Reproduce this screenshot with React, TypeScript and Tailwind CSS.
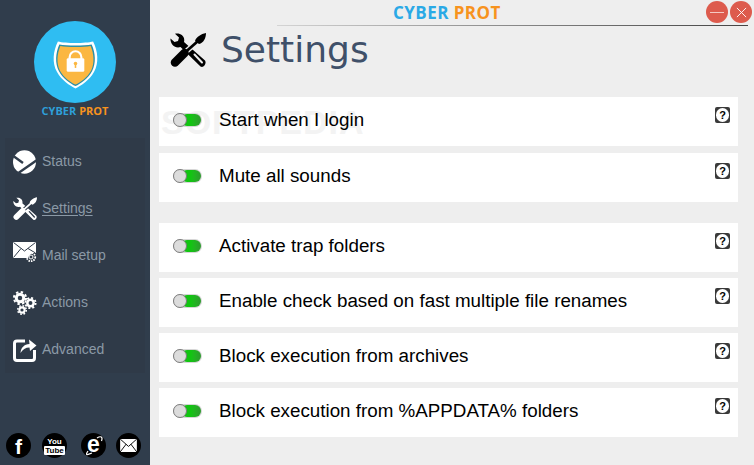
import { ReactNode } from 'react';

const font = "font-['Liberation_Sans',Arial,sans-serif]";

function ToolsIcon({ className, bg }: { className: string; bg: string }) {
  return (
    <svg viewBox="0 0 36 35" className={className} fill="currentColor">
      <path d="M0.500 5.500 L4.500 9 L8 8 L9 4.500 L5 0.800 C10 -0.500 15.500 3 14 9 L35 27.500 C37 30.500 33.500 35.500 30.500 33.500 L10.500 14 C5 16 0 11 0.500 5.500 Z" />
      <path d="M24.500 21.500 L32 29.500" stroke={bg} strokeWidth="2" strokeLinecap="round" fill="none" />
      <path d="M15 19.500 L28 8" stroke={bg} strokeWidth="5.500" fill="none" />
      <path d="M15 19.500 L28 8" stroke="currentColor" strokeWidth="2.800" fill="none" />
      <path d="M5 29.500 L14.500 20" stroke="currentColor" strokeWidth="8.500" strokeLinecap="round" fill="none" />
      <path d="M25 8 C26 4 31 1 36 0 C36 5 33.500 10 29 11 Z" />
    </svg>
  );
}

function StatusIcon() {
  return (
    <svg viewBox="0 0 23 24" className="w-[23px] h-[24px] text-white" fill="currentColor">
      <ellipse cx="11.500" cy="12" rx="11.500" ry="11.800" />
      <path d="M-1 5 L10 13 M24 10 L4 24" stroke="#303c4b" strokeWidth="2.400" fill="none" />
    </svg>
  );
}

function MailIcon() {
  return (
    <svg viewBox="0 0 28 24" className="w-[28px] h-[24px] text-white -mt-[4px]">
      <path d="M0 0 H23 V11 A7 7 0 0 0 15 16 H0 Z" fill="currentColor" />
      <path d="M0.500 0.500 L11.500 9 L22.500 0.500 M0.500 15.500 L8 6.500 M22.500 11 L15 6.500" stroke="#303c4b" strokeWidth="1" fill="none" />
      <circle cx="18" cy="15" r="4.200" stroke="currentColor" strokeWidth="1.800" strokeDasharray="1.500 1" fill="none" />
      <circle cx="18" cy="15" r="2" stroke="currentColor" strokeWidth="1" fill="none" />
    </svg>
  );
}

// eight teeth: the ring's circumference is split into 16 equal dashes
function Gear({ x, y, r }: { x: number; y: number; r: number }) {
  const ring = r * 0.86;
  const dash = (2 * Math.PI * ring) / 16;
  return (
    <g>
      <circle cx={x} cy={y} r={r * 0.74} fill="currentColor" />
      <circle cx={x} cy={y} r={ring} fill="none" stroke="currentColor" strokeWidth={r * 0.3} strokeDasharray={`${dash} ${dash}`} />
      <circle cx={x} cy={y} r={r * 0.32} fill="#303c4b" />
    </g>
  );
}

function GearsIcon() {
  return (
    <svg viewBox="0 0 24 25" className="w-[24px] h-[25px] text-white">
      <Gear x={7} y={8} r={7} />
      <Gear x={17.500} y={13} r={6} />
      <Gear x={9} y={20} r={5} />
    </svg>
  );
}

function AdvancedIcon() {
  return (
    <svg viewBox="0 0 24 24" className="w-[24px] h-[24px] text-white" fill="none" stroke="currentColor">
      <path d="M12 3 H4 Q1.500 3 1.500 5.500 V20 Q1.500 22.500 4 22.500 H19 Q21.500 22.500 21.500 20 V12" strokeWidth="3" />
      <path d="M7.500 15 C8 9.500 11 6.500 16.500 6 L16 1.500 L23.500 7.500 L17 13 L16.500 9.500 C12.500 9.500 9.500 11.500 7.500 15 Z" fill="currentColor" stroke="none" />
    </svg>
  );
}

function NavItem({ icon, label, active }: { icon: ReactNode; label: string; active?: boolean }) {
  return (
    <div className="h-[47px] mx-[5px] pl-[8px] flex items-center bg-[#2f3a48]">
      <div className="w-[29px] flex justify-start">{icon}</div>
      <span className={`text-[14px] text-[#8b99a6] ${active ? 'underline underline-offset-2' : ''}`}>{label}</span>
    </div>
  );
}

function SocialIcon({ children, className = '' }: { children: ReactNode; className?: string }) {
  return (
    <div className={`w-[25px] h-[25px] rounded-full bg-black flex items-center justify-center text-white relative ${className}`}>
      {children}
    </div>
  );
}

function SettingRow({ label, className = '', watermark }: { label: string; className?: string; watermark?: boolean }) {
  return (
    <div className={`h-[49px] bg-white flex items-start pl-[14px] pr-[8px] relative ${className}`}>
      {watermark && (
        <span className="absolute left-[2px] top-[8px] text-[34px] leading-[34px] font-bold tracking-[1px] text-[#f3f3f3]">SOFTPEDIA</span>
      )}
      <div className="mt-[16px] w-[29px] h-[14px] rounded-full bg-[#d6d6d6] relative shrink-0">
        <div className="absolute left-[8px] top-[1px] w-[20px] h-[12px] rounded-full bg-gradient-to-r from-[#12c412] from-50% to-[#2c9a2c]" />
        <div className="absolute left-0 top-0 w-[14px] h-[14px] rounded-full bg-[#dcdcdc] border border-[#7d7d7d]" />
      </div>
      <span className="ml-[17px] mt-[12px] text-[18.800px] leading-[22px] text-black relative">{label}</span>
      <div className="ml-auto mt-[10px] w-[15px] h-[16px] rounded-[2px] bg-[#3a3a3a] flex items-center justify-center">
        <div className="w-[13px] h-[14px] rounded-full bg-white text-[11px] leading-[14px] font-bold text-center text-black">?</div>
      </div>
    </div>
  );
}

export default function App() {
  return (
    <div className={`w-[754px] h-[465px] flex overflow-hidden bg-[#eeeeee] ${font}`}>
      <aside className="w-[150px] h-full shrink-0 bg-[#303d4c] flex flex-col">
        <div className="flex flex-col items-center pt-[21px]">
          <div className="w-[82px] h-[82px] rounded-full bg-[#2fbdf2] flex items-start justify-center pt-[18px]">
            <svg viewBox="0 0 48 52" className="w-[47px] h-[52px]">
              <path d="M6 2 C14 4 34 4 42 2 C47 12 48 24 43 33 C38 42 30 47 24 50 C18 47 10 42 5 33 C0 24 1 12 6 2 Z" fill="#ffffff" />
              <path d="M7.500 5 C15 6.500 33 6.500 40.500 5 C44.500 14 45 24 41 32 C37 40 29 45 24 47.500 C19 45 11 40 7 32 C3 24 3.500 14 7.500 5 Z" fill="#2b8fa8" />
              <path d="M8.500 6.500 C16 8 32 8 39.500 6.500 C43 15 43.500 24 40 31.500 C36 39 29 43.500 24 46 C19 43.500 12 39 8 31.500 C4.500 24 5 15 8.500 6.500 Z" fill="#fbb741" />
              <path d="M18 20 V18 A6 6 0 0 1 30 18 V20" fill="none" stroke="#ffffff" strokeWidth="2.200" />
              <rect x="15" y="19" width="18" height="14" rx="1.500" fill="#ffffff" />
              <circle cx="24" cy="24.500" r="1.800" fill="#fbb741" />
              <rect x="23.200" y="24.500" width="1.600" height="4.500" fill="#fbb741" />
            </svg>
          </div>
          <div className="mt-[1px] text-[11px] leading-[14px] font-bold font-['Open_Sans',sans-serif]">
            <span className="text-[#2e9fd8]">CYBER</span> <span className="text-[#f7931e]">PROT</span>
          </div>
        </div>
        <nav className="mt-[20px] flex flex-col">
          <NavItem icon={<StatusIcon />} label="Status" />
          <NavItem icon={<ToolsIcon className="w-[24px] h-[24px] text-white" bg="#2f3a48" />} label="Settings" active />
          <NavItem icon={<MailIcon />} label="Mail setup" />
          <NavItem icon={<GearsIcon />} label="Actions" />
          <NavItem icon={<AdvancedIcon />} label="Advanced" />
        </nav>
        <div className="mt-auto mb-[7px] pl-[6px] flex">
          <SocialIcon>
            <span className="text-[21px] font-bold leading-[25px] mt-[2px]">f</span>
          </SocialIcon>
          <SocialIcon className="ml-[11px]">
            <div className="flex flex-col items-center text-[8px] leading-[9px] font-bold">
              <span>You</span>
              <span className="bg-white text-black px-[1px] rounded-[1px]">Tube</span>
            </div>
          </SocialIcon>
          <SocialIcon className="ml-[14px]">
            <span className="text-[23px] font-bold leading-[25px] -mt-[3px]">e</span>
            <svg viewBox="0 0 25 25" className="absolute inset-0 w-[25px] h-[25px]" fill="none" stroke="#ffffff" strokeWidth="1.200">
              <path d="M7 18 C3 24 8 21 11 20 M16 5 C20 2.500 22 4 20.500 8" />
            </svg>
          </SocialIcon>
          <SocialIcon className="ml-[10px]">
            <svg viewBox="0 0 18 14" className="w-[17px] h-[13px]">
              <rect x="0" y="0" width="18" height="14" fill="#ffffff" />
              <path d="M0 0 L9 8 L18 0 M0 14 L6.500 5.500 M18 14 L11.500 5.500" stroke="#000000" strokeWidth="1" fill="none" />
            </svg>
          </SocialIcon>
        </div>
      </aside>

      <main className="flex-1 min-w-0 flex flex-col relative">
        <div className="absolute left-[127px] right-[6px] top-[25px] h-[1px] bg-gradient-to-r from-[#d4d4d4] to-[#444444]" />
        <div className="absolute left-[243px] top-[2px] text-[17px] leading-[21px] font-bold tracking-[0.45px] font-['Open_Sans',sans-serif]">
          <span className="text-[#2aa9e6]">CYBER</span> <span className="text-[#f7931e]">PROT</span>
        </div>
        <div className="absolute right-[2px] top-[1px] flex gap-[2px]">
          <div className="w-[22px] h-[22px] rounded-full bg-[#dd5b4d] flex items-center justify-center">
            <div className="w-[14px] h-[1px] bg-[#f5c9c3]" />
          </div>
          <div className="w-[22px] h-[22px] rounded-full bg-[#dd5b4d] flex items-center justify-center text-white">
            <svg viewBox="0 0 12 12" className="w-[11px] h-[11px]" stroke="currentColor" strokeWidth="1">
              <path d="M1 1 L11 11 M11 1 L1 11" />
            </svg>
          </div>
        </div>

        <header className="h-[97px] shrink-0 pt-[32px] pl-[20px] flex items-start">
          <ToolsIcon className="w-[36px] h-[35px] text-black mt-[1px]" bg="#eeeeee" />
          <h1 className="ml-[15px] text-[36px] leading-[36px] text-[#3f5069] font-['DejaVu_Sans',sans-serif]">Settings</h1>
        </header>
        <div className="ml-[9px] mr-[16px] flex flex-col gap-[6px]">
          <SettingRow label="Start when I login" className="mb-[1px]" watermark />
          <SettingRow label="Mute all sounds" className="mb-[15px]" />
          <SettingRow label="Activate trap folders" />
          <SettingRow label="Enable check based on fast multiple file renames" />
          <SettingRow label="Block execution from archives" />
          <SettingRow label="Block execution from %APPDATA% folders" />
        </div>
      </main>
    </div>
  );
}
